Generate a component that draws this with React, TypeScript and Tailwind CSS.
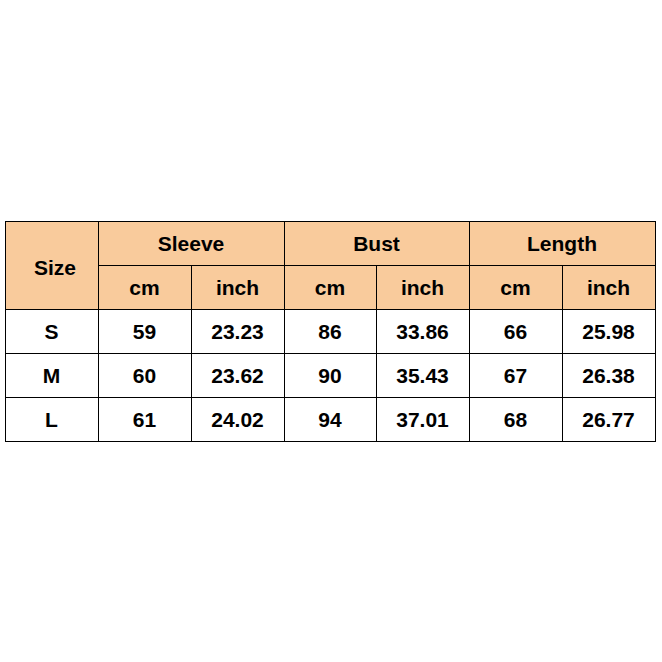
import React from "react";

const hdr = "bg-[#f9cb9c] flex items-center justify-center pt-[2px]";
const cell = "bg-white flex items-center justify-center pt-[2px]";

const rows = [
  ["S", "59", "23.23", "86", "33.86", "66", "25.98"],
  ["M", "60", "23.62", "90", "35.43", "67", "26.38"],
  ["L", "61", "24.02", "94", "37.01", "68", "26.77"],
];

export default function App() {
  return (
    <div className="w-[662px] h-[662px] bg-white flex items-center justify-center font-['Liberation_Sans',Arial,sans-serif] font-bold text-[21px] text-black">
      <div className="grid grid-cols-[92px_92px_92px_91px_92px_92px_92px] grid-rows-[repeat(5,43px)] gap-px p-px bg-black -translate-x-px">
        <div className="bg-[#f9cb9c] flex items-center justify-center row-span-2 pt-[5px] pl-[7px]">Size</div>
        <div className={`${hdr} col-span-2`}>Sleeve</div>
        <div className={`${hdr} col-span-2`}>Bust</div>
        <div className={`${hdr} col-span-2`}>Length</div>
        <div className={hdr}>cm</div>
        <div className={hdr}>inch</div>
        <div className={hdr}>cm</div>
        <div className={hdr}>inch</div>
        <div className={hdr}>cm</div>
        <div className={hdr}>inch</div>
        {rows.map((r) =>
          r.map((v, i) => (
            <div key={r[0] + i} className={cell}>
              {v}
            </div>
          ))
        )}
      </div>
    </div>
  );
}
